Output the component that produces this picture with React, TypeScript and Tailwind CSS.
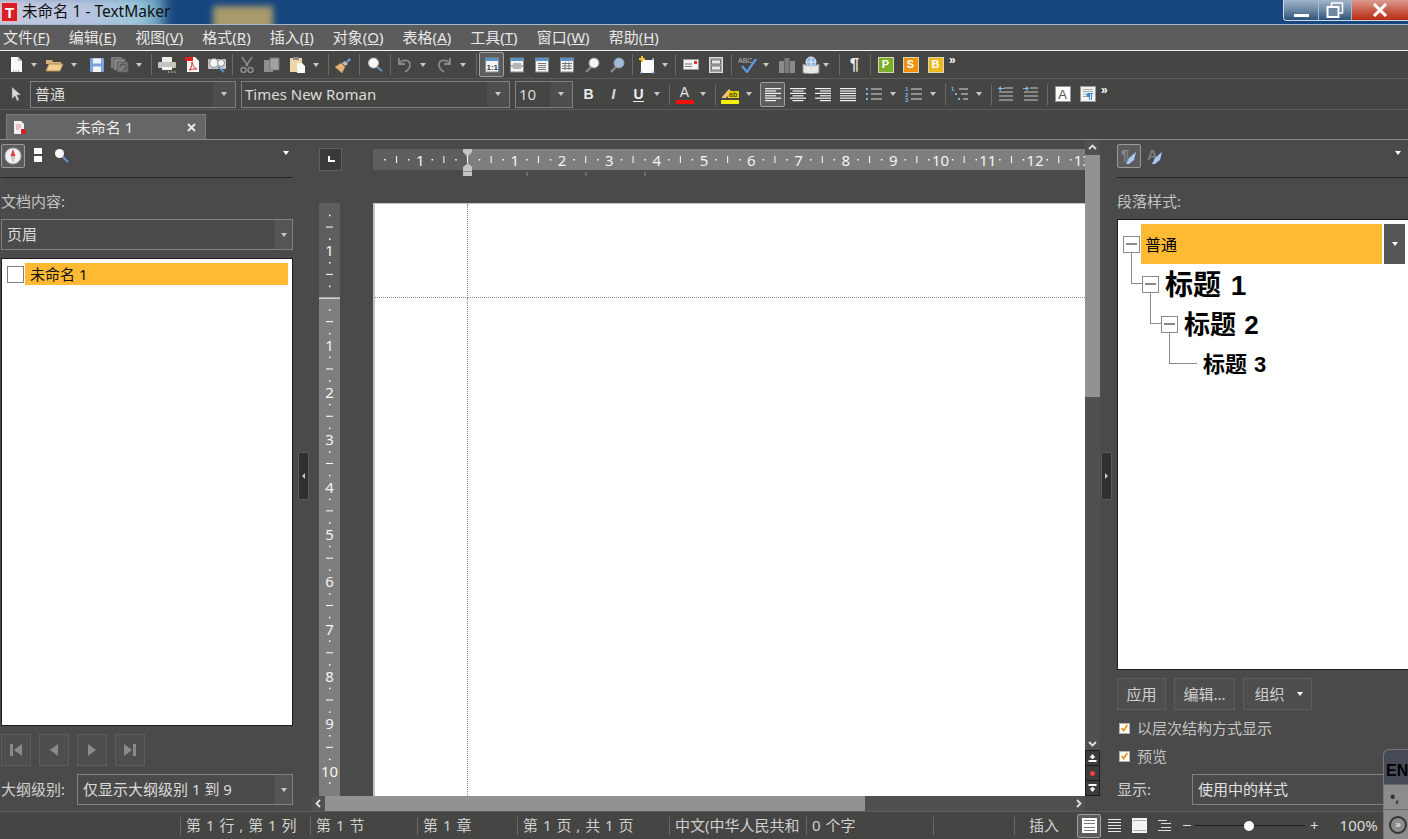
import type { ReactNode } from 'react';

type SlotProps = { m?: string; children?: ReactNode };

function Btn({ m = '', active, children }: SlotProps & { active?: boolean }) {
  return (
    <div
      className={`flex h-[25px] w-[25px] flex-none items-center justify-center rounded-[2px] ${m} ${
        active ? 'border border-[#a0a0a0] bg-[#5c5c5c]' : ''
      }`}
    >
      {children}
    </div>
  );
}

function Dd({ m = '' }: { m?: string }) {
  return (
    <div className={`flex h-[25px] w-[12px] flex-none items-center justify-center ${m}`}>
      <Caret />
    </div>
  );
}

function Caret({ color = 'border-t-[#c8c8c8]' }: { color?: string }) {
  return <span className={`block h-0 w-0 border-x-[3.5px] border-t-[4px] border-x-transparent ${color}`} />;
}

function Sep({ m = '' }: { m?: string }) {
  return <div className={`h-[21px] w-px flex-none bg-[#6a6a6a] ${m}`} />;
}

function Ico({ children, w = 20, h = 20 }: { children: ReactNode; w?: number; h?: number }) {
  return (
    <svg width={w} height={h} viewBox={`0 0 ${w} ${h}`} fill="none">
      {children}
    </svg>
  );
}

function Lines({ aligned }: { aligned: 'l' | 'c' | 'r' | 'j' }) {
  const rows = [16, 11, 16, 11, 16, 11];
  return (
    <Ico w={18} h={16}>
      {rows.map((len, i) => {
        const l = aligned === 'j' ? 16 : len;
        const x = aligned === 'l' || aligned === 'j' ? 1 : aligned === 'r' ? 17 - l : 9 - l / 2;
        return <rect key={i} x={x} y={2 + i * 2.4} width={l} height="1.2" fill="#f2f2f2" />;
      })}
    </Ico>
  );
}

function ViewIcon({ kind }: { kind: 0 | 1 | 2 | 3 }) {
  return (
    <Ico w={16} h={16}>
      <rect x="1.5" y="1" width="13" height="14" fill="#f4f4f4" stroke="#8a8a8a" />
      <rect x="1.5" y="1" width="13" height="3" fill="#5a92c8" />
      {kind === 0 && (
        <text x="2.5" y="12.5" fontSize="8" fontWeight="700" fill="#2c3e5a" fontFamily="Liberation Sans, sans-serif">
          1:1
        </text>
      )}
      {kind === 1 && (
        <>
          <rect x="4" y="6.5" width="8" height="1" fill="#777" />
          <rect x="4" y="8.5" width="8" height="1" fill="#777" />
          <rect x="4" y="10.5" width="8" height="1" fill="#777" />
          <path d="M2 9l1.5-1.5v3zM14 9l-1.500-1.500v3z" fill="#3a78b0" />
        </>
      )}
      {kind === 2 && (
        <>
          <rect x="4" y="6" width="8" height="1" fill="#777" />
          <rect x="4" y="8" width="8" height="1" fill="#777" />
          <rect x="4" y="10" width="8" height="1" fill="#777" />
          <rect x="4" y="12" width="8" height="1" fill="#777" />
        </>
      )}
      {kind === 3 && <path d="M3 6.500h10M3 9h10M3 11.500h10M6 5v8M10 5v8" stroke="#777" />}
    </Ico>
  );
}

function Magnifier({ fill = '#f6f6f6', handle = '#8a8a8a' }: { fill?: string; handle?: string }) {
  return (
    <Ico w={18} h={18}>
      <path d="M9.500 9.500L3 16" stroke={handle} strokeWidth="2.400" />
      <circle cx="11" cy="7" r="5" fill={fill} stroke="#9a9a9a" />
    </Ico>
  );
}

function Toolbar1() {
  return (
    <div className="flex h-[28px] items-center border-b border-[#5c5c5a] bg-[#454543] pl-[3px]">
      <Btn>
        <Ico w={14} h={17}>
          <path d="M2 1h7l4 4v11H2z" fill="#fafafa" />
          <path d="M9 1v4h4" fill="#bdbdbd" />
          <path d="M4 15h1M6.500 15h1M9 15h1" stroke="#666" />
        </Ico>
      </Btn>
      <Dd />
      <Btn m="ml-[2px]">
        <Ico w={19} h={16}>
          <path d="M1 3h6l1 2h8v2H1z" fill="#d8b47c" />
          <path d="M1 14L4 7h14l-3 7z" fill="#f3cf94" stroke="#b28d58" />
        </Ico>
      </Btn>
      <Dd m="ml-px" />
      <Btn m="ml-[4px]">
        <Ico w={16} h={16}>
          <rect x="1" y="1" width="14" height="14" rx="1" fill="#7da2dc" />
          <rect x="4" y="1.500" width="8" height="5" fill="#eef3fb" />
          <rect x="4" y="9.500" width="8" height="5.500" fill="#f4f4f4" />
        </Ico>
      </Btn>
      <Btn m="ml-[-2px]">
        <Ico w={19} h={17}>
          <rect x="1" y="1" width="11" height="11" fill="#7c7c7c" />
          <rect x="4" y="3" width="11" height="11" fill="#8e8e8e" stroke="#666" />
          <rect x="7" y="6" width="11" height="10" fill="#7a7a7a" stroke="#5a5a5a" />
          <path d="M10 11a3 3 0 1 1 3 3" stroke="#4a4a4a" />
        </Ico>
      </Btn>
      <Dd m="ml-px" />
      <Sep m="ml-[6px]" />
      <Btn m="ml-[2px]">
        <Ico w={20} h={18}>
          <rect x="5" y="1" width="10" height="5" fill="#eaeaea" />
          <rect x="1" y="6" width="18" height="6" rx="1" fill="#c4c4c4" />
          <rect x="5" y="11" width="10" height="3" fill="#f4f4f4" />
          <circle cx="16" cy="8" r="1" fill="#d9d54a" />
          <path d="M11 16h1.500M14 16h1.500M17 16h1.500" stroke="#ddd" />
        </Ico>
      </Btn>
      <Btn>
        <Ico w={16} h={17}>
          <path d="M3 1h8l4 4v11H3z" fill="#fafafa" />
          <rect x="1" y="1" width="8" height="4" fill="#e21e1e" />
          <path d="M5 14c2-1 3-4 3-8 1 4 2 6 5 7-3 0-5 0-8 1z" stroke="#d83030" />
        </Ico>
      </Btn>
      <Btn>
        <Ico w={20} h={17}>
          <rect x="1" y="3" width="18" height="10" rx="1" fill="#c8c8c8" />
          <circle cx="7" cy="7" r="4.500" fill="#f5f5f5" stroke="#888" />
          <circle cx="14" cy="7" r="3.500" fill="#f5f5f5" stroke="#888" />
          <path d="M11 11l6 5" stroke="#5c8ecb" strokeWidth="2" />
        </Ico>
      </Btn>
      <Sep m="ml-[3px]" />
      <Btn m="ml-px">
        <Ico w={16} h={18}>
          <path d="M3 1l6 9M13 1L7 10" stroke="#8c8c8c" strokeWidth="1.500" />
          <circle cx="4.500" cy="14" r="2.500" stroke="#8c8c8c" strokeWidth="1.500" />
          <circle cx="11.500" cy="14" r="2.500" stroke="#8c8c8c" strokeWidth="1.500" />
        </Ico>
      </Btn>
      <Btn>
        <Ico w={17} h={16}>
          <rect x="1" y="3" width="9" height="12" fill="#8f8f8f" />
          <rect x="7" y="1" width="9" height="12" fill="#a2a2a2" stroke="#777" />
        </Ico>
      </Btn>
      <Btn m="ml-px">
        <Ico w={17} h={18}>
          <rect x="1" y="2" width="12" height="14" fill="#efd6a6" />
          <rect x="4" y="1" width="6" height="3" fill="#8a8a8a" />
          <path d="M8 7h5l3 3v7H8z" fill="#fafafa" />
        </Ico>
      </Btn>
      <Dd />
      <Sep m="ml-[6px]" />
      <Btn m="ml-px">
        <Ico w={18} h={18}>
          <path d="M12 6l3-4 2 2-4 3z" fill="#6f9ed6" />
          <path d="M11 5l3 3-3 2-3-3z" fill="#bdbdbd" />
          <path d="M7 7l4 4-3 6-7-6z" fill="#e2b873" stroke="#b28d58" strokeWidth="0.500" />
        </Ico>
      </Btn>
      <Sep m="ml-[4px]" />
      <Btn m="ml-[2px]">
        <Ico w={16} h={16}>
          <path d="M9 9l6 5" stroke="#6b93cf" strokeWidth="2" />
          <circle cx="6.500" cy="6" r="5" fill="#f8f8f8" stroke="#bdbdbd" />
        </Ico>
      </Btn>
      <Sep m="ml-[3px]" />
      <Btn m="ml-px">
        <Ico w={17} h={17}>
          <path d="M3 2v6h6M3 8c3-5 11-5 11 1 0 3-2 5-5 7" stroke="#8a8a8a" strokeWidth="1.800" />
        </Ico>
      </Btn>
      <Dd />
      <Btn m="ml-[3px]">
        <Ico w={17} h={17}>
          <path d="M14 2v6H8M14 8C11 3 3 3 3 9c0 3 2 5 5 7" stroke="#8a8a8a" strokeWidth="1.800" />
        </Ico>
      </Btn>
      <Dd />
      <Sep m="ml-[7px]" />
      <Btn m="ml-[2px]" active>
        <ViewIcon kind={0} />
      </Btn>
      <Btn>
        <ViewIcon kind={1} />
      </Btn>
      <Btn>
        <ViewIcon kind={2} />
      </Btn>
      <Btn>
        <ViewIcon kind={3} />
      </Btn>
      <Btn>
        <Magnifier />
      </Btn>
      <Btn>
        <Magnifier fill="#9fbce0" />
      </Btn>
      <Sep m="ml-[3px]" />
      <Btn m="ml-px">
        <Ico w={19} h={18}>
          <rect x="4" y="4" width="13" height="13" fill="#fafafa" />
          <path d="M5 0v6M2 3h6" stroke="#f2c230" strokeWidth="2" />
          <rect x="15" y="2" width="2" height="2" fill="#7da2dc" />
          <rect x="3" y="15.500" width="2" height="2" fill="#7da2dc" />
          <rect x="15.500" y="15.500" width="2" height="2" fill="#7da2dc" />
        </Ico>
      </Btn>
      <Dd />
      <Sep m="ml-[4px]" />
      <Btn m="ml-[2px]">
        <Ico w={16} h={11}>
          <rect x="0.500" y="0.500" width="15" height="10" fill="#f2f2f2" stroke="#999" />
          <rect x="11" y="2" width="3" height="3" fill="#d33" />
          <path d="M2 5h7M2 7.500h7" stroke="#777" />
        </Ico>
      </Btn>
      <Btn>
        <Ico w={14} h={16}>
          <rect x="0.500" y="0.500" width="13" height="15" fill="#a8a8a8" stroke="#dcdcdc" />
          <rect x="2.500" y="3" width="9" height="4" fill="#e8e8e8" stroke="#777" />
          <rect x="2.500" y="9" width="9" height="4" fill="#e8e8e8" stroke="#777" />
        </Ico>
      </Btn>
      <Sep m="ml-[3px]" />
      <Btn m="ml-[3px]">
        <Ico w={20} h={17}>
          <path d="M4 10l5 6L18 3" stroke="#5f9ae0" strokeWidth="2.200" />
          <text x="0" y="7" fontSize="7" fill="#b8b8b8" fontFamily="Liberation Sans, sans-serif">
            ABC
          </text>
        </Ico>
      </Btn>
      <Dd />
      <Btn m="ml-[2px]">
        <Ico w={16} h={16}>
          <rect x="0" y="4" width="5" height="12" fill="#8a8a8a" />
          <rect x="5.500" y="1" width="5" height="15" fill="#7c7c7c" />
          <rect x="11" y="4" width="5" height="12" fill="#8a8a8a" />
        </Ico>
      </Btn>
      <Btn m="ml-[-1px]">
        <Ico w={18} h={18}>
          <path d="M1 8l8 3 8-3v9l-8 1-8-1z" fill="#e8e8e8" stroke="#888" />
          <circle cx="9" cy="6" r="5" fill="#8fb4dd" stroke="#e6eef8" />
          <path d="M4 6h10M9 1v10" stroke="#e6eef8" />
        </Ico>
      </Btn>
      <Dd m="ml-[-3px]" />
      <Sep m="ml-[7px]" />
      <Btn m="ml-[2px]">
        <span className="font-['Liberation_Sans',sans-serif] text-[17px] font-bold leading-none text-[#ededed]">¶</span>
      </Btn>
      <Sep m="ml-[3px]" />
      <Btn m="ml-[2px]">
        <OfficeBadge letter="P" color="bg-[#7cae2a]" />
      </Btn>
      <Btn>
        <OfficeBadge letter="S" color="bg-[#f0920c]" />
      </Btn>
      <Btn>
        <OfficeBadge letter="B" color="bg-[#f0b81c]" />
      </Btn>
      <span className="mb-[9px] ml-[1px] font-['Liberation_Sans',sans-serif] text-[12px] font-bold leading-none text-white">»</span>
    </div>
  );
}

function OfficeBadge({ letter, color }: { letter: string; color: string }) {
  return (
    <span
      className={`flex h-[16px] w-[16px] items-center justify-center border border-[#d8d8b8] font-['Liberation_Sans',sans-serif] text-[11px] font-bold leading-none text-white ${color}`}
    >
      {letter}
    </span>
  );
}

function Combo({ w, label, small }: { w: string; label: string; small?: boolean }) {
  return (
    <div className={`flex h-[27px] flex-none items-center border border-[#808080] ${w}`}>
      <span className={`flex-1 whitespace-nowrap text-[15px] leading-[20px] text-[#dcdcdc] ${small ? 'pl-[3px]' : 'pl-[4px]'}`}>
        {label}
      </span>
      <span className="flex h-full w-[22px] flex-none items-center justify-center bg-[#4e4e4e]">
        <Caret />
      </span>
    </div>
  );
}

function Toolbar2() {
  return (
    <div className="flex h-[31px] items-center border-b border-[#5c5c5a] bg-[#454543] pl-[3px]">
      <Btn>
        <Ico w={12} h={16}>
          <path d="M2 1v12l3-3 2 5 2-1-2-5h4z" fill="#d8d8d8" stroke="#666" strokeWidth="0.500" />
        </Ico>
      </Btn>
      <div className="ml-[2px]">
        <Combo w="w-[206px]" label="普通" />
      </div>
      <div className="ml-[5px]">
        <Combo w="w-[269px]" label="Times New Roman" small />
      </div>
      <div className="ml-[5px]">
        <Combo w="w-[58px]" label="10" small />
      </div>
      <Btn m="ml-[3px]">
        <span className="font-['Liberation_Sans',sans-serif] text-[14px] font-bold leading-none text-[#eee]">B</span>
      </Btn>
      <Btn>
        <span className="font-['Liberation_Sans',sans-serif] text-[14px] font-bold italic leading-none text-[#ddd]">I</span>
      </Btn>
      <Btn>
        <span className="border-b border-[#eee] font-['Liberation_Sans',sans-serif] text-[14px] font-bold leading-[14px] text-[#eee]">U</span>
      </Btn>
      <Dd />
      <Sep m="ml-[6px]" />
      <Btn m="ml-[2px]">
        <span className="flex flex-col items-center">
          <span className="font-['Liberation_Sans',sans-serif] text-[14px] leading-[14px] text-[#e6e6e6]">A</span>
          <span className="mt-px h-[4px] w-[18px] bg-[#f01010]" />
        </span>
      </Btn>
      <Dd />
      <Sep m="ml-[6px]" />
      <Btn m="ml-[2px]">
        <Ico w={19} h={19}>
          <path d="M1 12l7-8 3 3-6 6H1z" fill="#f2c27a" />
          <rect x="7" y="6" width="11" height="7" fill="#e6d200" />
          <text x="8" y="12" fontSize="7" fontWeight="700" fill="#5a5200" fontFamily="Liberation Sans, sans-serif">
            ab
          </text>
          <rect x="0" y="15" width="18" height="4" fill="#f5ef00" />
        </Ico>
      </Btn>
      <Dd />
      <Btn m="ml-[5px]" active>
        <Lines aligned="l" />
      </Btn>
      <Btn>
        <Lines aligned="c" />
      </Btn>
      <Btn>
        <Lines aligned="r" />
      </Btn>
      <Btn>
        <Lines aligned="j" />
      </Btn>
      <Btn m="ml-px">
        <Ico w={18} h={14}>
          <path d="M6 2h11M6 7h11M6 12h11" stroke="#ddd" />
          <path d="M1 2h3M1 7h3M1 12h3" stroke="#7db8ea" strokeWidth="2" strokeDasharray="2 1" />
        </Ico>
      </Btn>
      <Dd m="ml-px" />
      <Btn m="ml-[2px]">
        <Ico w={18} h={16}>
          <path d="M6 3h11M6 8h11M6 13h11" stroke="#ddd" />
          <text x="0" y="5" fontSize="6" fontWeight="700" fill="#7db8ea" fontFamily="Liberation Sans, sans-serif">1</text>
          <text x="0" y="10.500" fontSize="6" fontWeight="700" fill="#7db8ea" fontFamily="Liberation Sans, sans-serif">2</text>
          <text x="0" y="16" fontSize="6" fontWeight="700" fill="#7db8ea" fontFamily="Liberation Sans, sans-serif">3</text>
        </Ico>
      </Btn>
      <Dd m="ml-px" />
      <Sep m="ml-[6px]" />
      <Btn m="ml-px">
        <Ico w={18} h={16}>
          <text x="0" y="5" fontSize="6" fontWeight="700" fill="#7db8ea" fontFamily="Liberation Sans, sans-serif">1</text>
          <path d="M8 3h9M10 8h7M12 13h5" stroke="#ddd" />
          <path d="M4 8h2M7 13h2" stroke="#7db8ea" strokeWidth="2" />
        </Ico>
      </Btn>
      <Dd m="ml-px" />
      <Sep m="ml-[6px]" />
      <Btn m="ml-px">
        <Ico w={16} h={16}>
          <path d="M6 2h9M1 6h14M1 10h14M1 14h14" stroke="#c8c8c8" />
          <path d="M0 2.500l3-2.500v5zM3 2h3v1H3z" fill="#7db8ea" />
        </Ico>
      </Btn>
      <Btn>
        <Ico w={16} h={16}>
          <path d="M7 2h8M1 6h14M1 10h14M1 14h14" stroke="#c8c8c8" />
          <path d="M6 2.500L3 0v5zM0 2h3v1H0z" fill="#7db8ea" />
        </Ico>
      </Btn>
      <Sep m="ml-[4px]" />
      <Btn m="ml-[2px]">
        <span className="flex h-[16px] w-[16px] items-center justify-center border border-[#999] bg-white font-['Liberation_Sans',sans-serif] text-[13px] leading-none text-[#555]">
          A
        </span>
      </Btn>
      <Btn>
        <Ico w={16} h={16}>
          <rect x="0.500" y="0.500" width="15" height="15" fill="#f4f4f4" stroke="#999" />
          <path d="M3 3.500h10M3 5.500h10M3 8h4M3 10.500h4" stroke="#aaa" />
          <path d="M8 7h5v1h-1v6h-1V8h-1v6H9v-3a2 2 0 0 1-1-4z" fill="#3a86c8" />
        </Ico>
      </Btn>
      <span className="mb-[9px] ml-[1px] font-['Liberation_Sans',sans-serif] text-[12px] font-bold leading-none text-white">»</span>
    </div>
  );
}

function TitleBar() {
  return (
    <div className="relative flex h-[25px] items-start overflow-hidden border-b border-[#a8b8cc] bg-[#16467f]">
      <div className="absolute left-[-10px] top-[-6px] h-[40px] w-[175px] bg-[linear-gradient(90deg,#c6cce0_0%,#b8c4e0_55%,#9cc8dc_85%,#5a90b0_100%)] blur-[6px]" />
      <div className="absolute left-[213px] top-[6px] h-[24px] w-[60px] bg-[#a89a6c] blur-[3px]" />
      <div className="relative flex h-[24px] items-center">
        <span className="ml-[1px] flex h-[20px] w-[17px] items-center justify-center border border-[#f0b8b8] bg-[#d81e28] font-['Liberation_Sans',sans-serif] text-[15px] font-bold leading-none text-white">
          T
        </span>
        <span className="ml-[4px] text-[15.500px] leading-none text-[#111]">未命名 1 - TextMaker</span>
      </div>
      <div className="relative ml-auto flex h-[21px] overflow-hidden rounded-bl-[4px] border-b border-l border-[#d0dcea]">
        <span className="flex w-[35px] items-end justify-center border-r border-[#a8b8cc] bg-[linear-gradient(180deg,#a0b4c8_0%,#6c88a4_50%,#2c5278_100%)] pb-[3px]">
          <span className="h-[3px] w-[15px] bg-white" />
        </span>
        <span className="flex w-[33px] items-center justify-center border-r border-[#a8b8cc] bg-[linear-gradient(180deg,#a0b4c8_0%,#6c88a4_50%,#2c5278_100%)]">
          <Ico w={18} h={17}>
            <rect x="5.500" y="1" width="11" height="10" stroke="#fff" strokeWidth="1.500" />
            <rect x="1.500" y="5" width="11" height="10" fill="#6c88a4" stroke="#fff" strokeWidth="2" />
          </Ico>
        </span>
        <span className="flex w-[56px] items-center justify-center bg-[linear-gradient(180deg,#dc9a90_0%,#c8604c_50%,#b82c14_100%)]">
          <Ico w={16} h={14}>
            <path d="M2 1l12 12M14 1L2 13" stroke="#fff" strokeWidth="3" />
          </Ico>
        </span>
      </div>
    </div>
  );
}

const MENUS: [string, string][] = [
  ['文件', 'F'],
  ['编辑', 'E'],
  ['视图', 'V'],
  ['格式', 'R'],
  ['插入', 'I'],
  ['对象', 'O'],
  ['表格', 'A'],
  ['工具', 'T'],
  ['窗口', 'W'],
  ['帮助', 'H'],
];

function MenuBar() {
  return (
    <div className="flex h-[26px] items-center gap-[19px] border-b border-[#f0f0f0] bg-[#5c5c5c] pl-[3px] text-[15px] leading-none text-[#e8e8e8]">
      {MENUS.map(([name, key]) => (
        <span key={key} className="whitespace-nowrap">
          {name}(<u>{key}</u>)
        </span>
      ))}
    </div>
  );
}

function TabStrip() {
  return (
    <div className="flex h-[30px] items-end border-b border-[#8a8a8a] bg-[#454543] pl-[6px]">
      <div className="flex h-[25px] w-[200px] items-center border border-b-0 border-[#7a7a7a] bg-[#666666] pl-[6px] pr-[8px]">
        <Ico w={14} h={15}>
          <path d="M1 1h7l3 3v10H1z" fill="#f2f2f2" />
          <path d="M3 5h5M3 7h5M3 9h3" stroke="#d88" />
          <rect x="8" y="9" width="5" height="5" fill="#d81e28" />
        </Ico>
        <span className="flex-1 pr-[4px] text-center text-[15px] leading-none text-[#ececec]">未命名 1</span>
        <Ico w={11} h={11}>
          <path d="M2 2l7 7M9 2l-7 7" stroke="#e8e8e8" strokeWidth="2" />
        </Ico>
      </div>
    </div>
  );
}

function NavBtn({ children }: { children: ReactNode }) {
  return (
    <div className="flex h-[32px] w-[30px] items-center justify-center border border-[#5c5c5c] bg-[#4e4e4e]">
      {children}
    </div>
  );
}

function LeftPanel() {
  return (
    <div className="flex w-[297px] flex-none flex-col pl-px">
      <div className="flex h-[38px] w-[292px] flex-none items-start border-b border-[#262626] pt-[4px]">
        <span className="flex h-[24px] w-[24px] items-center justify-center rounded-[2px] border border-[#9a9a9a] bg-[#5c5c5c]">
          <Ico w={18} h={18}>
            <circle cx="9" cy="9" r="8" fill="#f2f2f2" stroke="#aaa" />
            <path d="M9 2l2.500 7h-5z" fill="#e83838" />
            <path d="M9 16l2.500-7h-5z" fill="#c4c4c4" />
          </Ico>
        </span>
        <span className="ml-[9px] mt-[4px] flex w-[8px] flex-col gap-[2px]">
          <span className="h-[6px] w-[8px] bg-white" />
          <span className="h-[6px] w-[8px] bg-white" />
        </span>
        <span className="ml-[12px] mt-[4px]">
          <Ico w={16} h={16}>
            <path d="M8 8l6 6" stroke="#6b93cf" strokeWidth="2" />
            <circle cx="5.500" cy="5.500" r="4.500" fill="#f8f8f8" />
          </Ico>
        </span>
        <span className="ml-auto mr-[4px] mt-[7px]">
          <Caret color="border-t-white" />
        </span>
      </div>
      <div className="mt-[15px] text-[15px] leading-[16px] text-[#c4c4c4]">文档内容:</div>
      <div className="mt-[10px] flex h-[31px] w-[292px] flex-none items-center border border-[#808080]">
        <span className="flex-1 pl-[5px] text-[15px] leading-none text-[#dcdcdc]">页眉</span>
        <span className="flex h-full w-[17px] items-center justify-center bg-[#555555]">
          <Caret />
        </span>
      </div>
      <div className="mt-[8px] flex h-[468px] w-[292px] flex-none flex-col border border-[#1c1c1c] bg-white pl-[5px] pr-[4px] pt-[4px]">
        <div className="flex items-center">
          <span className="h-[17px] w-[17px] flex-none border border-[#808080] bg-white" />
          <span className="ml-px flex h-[22px] flex-1 items-center bg-[#ffb933] pl-[5px] text-[15px] leading-none text-[#111]">
            未命名 1
          </span>
        </div>
      </div>
      <div className="mt-[8px] flex gap-[8px]">
        <NavBtn>
          <Ico w={14} h={14}>
            <path d="M1 1h3v12H1zM13 1v12L5 7z" fill="#8a8a8a" />
          </Ico>
        </NavBtn>
        <NavBtn>
          <Ico w={10} h={14}>
            <path d="M9 1v12L1 7z" fill="#8a8a8a" />
          </Ico>
        </NavBtn>
        <NavBtn>
          <Ico w={10} h={14}>
            <path d="M1 1v12l8-6z" fill="#8a8a8a" />
          </Ico>
        </NavBtn>
        <NavBtn>
          <Ico w={14} h={14}>
            <path d="M10 1h3v12h-3zM1 1v12l8-6z" fill="#8a8a8a" />
          </Ico>
        </NavBtn>
      </div>
      <div className="mt-[8px] flex items-center">
        <span className="w-[76px] whitespace-nowrap text-[15px] leading-none text-[#d0d0d0]">大纲级别:</span>
        <div className="flex h-[31px] w-[216px] items-center border border-[#808080]">
          <span className="flex-1 whitespace-nowrap pl-[5px] text-[15px] leading-none text-[#dcdcdc]">仅显示大纲级别 1 到 9</span>
          <span className="flex h-full w-[17px] items-center justify-center bg-[#555555]">
            <Caret />
          </span>
        </div>
      </div>
    </div>
  );
}

function Splitter({ w, dir }: { w: string; dir: 'l' | 'r' }) {
  return (
    <div className={`flex flex-none items-center ${w}`}>
      <div className="ml-px flex h-[48px] w-[11px] items-center justify-center rounded-[2px] border border-[#5a5a5a] bg-[#303030]">
        <span
          className={`h-0 w-0 border-y-[3px] border-y-transparent ${
            dir === 'l' ? 'border-r-[3px] border-r-[#c8c8c8]' : 'border-l-[3px] border-l-[#c8c8c8]'
          }`}
        />
      </div>
    </div>
  );
}

const INCH = 47.3;

function HRuler() {
  const origin = 94.5;
  const nums = [-1, 1, 2, 3, 4, 5, 6, 7, 8, 9, 10, 11, 12, 13];
  const steps = Array.from({ length: 32 }, (_, i) => i - 4);
  return (
    <svg width="712" height="32" className="block flex-none">
      <rect x="0" y="0" width="95" height="21" fill="#5e5e5e" />
      <rect x="95" y="0" width="617" height="21" fill="#7e7e7e" />
      {steps.map((s) => {
        if (s % 2 === 0) return null;
        const x = origin + (s * INCH) / 2;
        return <rect key={s} x={x - 0.5} y="7" width="1" height="7" fill="#fff" />;
      })}
      {steps.map((s) => {
        const a = origin + ((s + 0.5) * INCH) / 2;
        return <rect key={`d${s}`} x={a - 0.5} y="10" width="1.500" height="1.500" fill="#fff" />;
      })}
      {nums.map((n) => (
        <text
          key={n}
          x={origin + n * INCH}
          y="16.500"
          textAnchor="middle"
          fontSize="15"
          fill="#f4f4f4"
          fontFamily="Noto Sans, sans-serif"
        >
          {Math.abs(n)}
        </text>
      ))}
      <path d="M90 0h9v3l-4.500 5L90 3z" fill="#c4c4c4" />
      <path d="M95 14l4 4v9h-9v-9z" fill="#c4c4c4" />
      <rect x="94" y="7" width="1" height="7" fill="#fff" />
      <rect x="90" y="22" width="9" height="1" fill="#888" />
      <rect x="153.500" y="23" width="1" height="4" fill="#8a8a8a" />
      <rect x="212.500" y="23" width="1" height="4" fill="#8a8a8a" />
      <rect x="271.500" y="23" width="1" height="4" fill="#8a8a8a" />
    </svg>
  );
}

function VRuler() {
  const origin = 95;
  const nums = [-1, 1, 2, 3, 4, 5, 6, 7, 8, 9, 10];
  const steps = Array.from({ length: 25 }, (_, i) => i - 4);
  return (
    <svg width="21" height="593" className="block">
      <rect x="0" y="0" width="21" height="95" fill="#5e5e5e" />
      <rect x="0" y="95" width="21" height="498" fill="#7e7e7e" />
      <rect x="0" y="94.500" width="21" height="1.200" fill="#f4f4f4" />
      {steps.map((s) =>
        s % 2 === 0 ? null : (
          <rect key={s} x="7" y={origin + (s * INCH) / 2 - 0.5} width="7" height="1" fill="#fff" />
        ),
      )}
      {steps.map((s) => (
        <rect key={`d${s}`} x="10" y={origin + ((s + 0.5) * INCH) / 2 - 0.5} width="1.500" height="1.500" fill="#fff" />
      ))}
      {nums.map((n) => (
        <text
          key={n}
          x="10.500"
          y={origin + n * INCH + 5.500}
          textAnchor="middle"
          fontSize="15"
          fill="#f4f4f4"
          fontFamily="Noto Sans, sans-serif"
        >
          {Math.abs(n)}
        </text>
      ))}
    </svg>
  );
}

function Chevron({ d }: { d: string }) {
  return (
    <svg width="9" height="9" viewBox="0 0 9 9" fill="none">
      <path d={d} stroke="#e0e0e0" strokeWidth="1.800" />
    </svg>
  );
}

function VScroll() {
  return (
    <div className="flex w-[15px] flex-none flex-col bg-[#505050]">
      <div className="flex h-[15px] flex-none items-center justify-center">
        <Chevron d="M1 6l3.500-3.500L8 6" />
      </div>
      <div className="h-[242px] flex-none bg-[#929292]" />
      <div className="flex-1" />
      <div className="flex h-[13px] flex-none items-center justify-center">
        <Chevron d="M1 3l3.500 3.500L8 3" />
      </div>
      <div className="flex h-[46px] flex-none flex-col border border-[#1c1c1c] bg-[#3c3c3c]">
        <div className="flex flex-1 items-center justify-center border-b border-[#1c1c1c]">
          <svg width="9" height="8" viewBox="0 0 9 8">
            <path d="M4.500 0l3 3.500h-6z" fill="#fff" />
            <rect x="3.500" y="3" width="2" height="2" fill="#fff" />
            <rect x="0.500" y="6" width="8" height="2" fill="#fff" />
          </svg>
        </div>
        <div className="flex flex-1 items-center justify-center border-b border-[#1c1c1c]">
          <span className="h-[5px] w-[5px] rounded-full bg-[#f04040]" />
        </div>
        <div className="flex flex-1 items-center justify-center">
          <svg width="9" height="8" viewBox="0 0 9 8">
            <rect x="0.500" y="0" width="8" height="2" fill="#fff" />
            <rect x="3.500" y="3" width="2" height="2" fill="#fff" />
            <path d="M4.500 8l3-3.500h-6z" fill="#fff" />
          </svg>
        </div>
      </div>
    </div>
  );
}

function Center() {
  return (
    <div className="flex min-w-0 flex-1 flex-col">
      <div className="flex min-h-0 flex-1">
        <div className="ml-[7px] flex w-[54px] flex-none flex-col">
          <div className="ml-0 mt-[8px] flex h-[23px] w-[23px] items-center justify-center border border-[#606060] bg-[#3a3a3a]">
            <span className="mb-px ml-px h-[6px] w-[7px] border-b-2 border-l-2 border-white" />
          </div>
          <div className="mt-[32px]">
            <VRuler />
          </div>
        </div>
        <div className="flex w-[712px] flex-none flex-col pt-[9px]">
          <HRuler />
          <div className="mt-[22px] grid flex-1 grid-cols-[93px_1fr] grid-rows-[94px_1fr] border-l-2 border-t border-[#c4c4c4] bg-white">
            <div className="border-b border-r border-dotted border-[#8c8c8c]" />
            <div className="border-b border-dotted border-[#8c8c8c]" />
            <div className="border-r border-dotted border-[#8c8c8c]" />
            <div />
          </div>
        </div>
        <VScroll />
      </div>
      <div className="flex h-[15px] flex-none">
        <div className="flex w-[13px] flex-none items-center justify-center bg-[#505050]">
          <Chevron d="M6 1L2.500 4.500 6 8" />
        </div>
        <div className="w-[540px] flex-none bg-[#929292]" />
        <div className="w-[207px] flex-none bg-[#505050]" />
        <div className="flex w-[13px] flex-none items-center justify-center bg-[#505050]">
          <Chevron d="M3 1l3.500 3.500L3 8" />
        </div>
      </div>
    </div>
  );
}

function TreeBox() {
  return (
    <span className="relative z-10 flex h-[17px] w-[17px] flex-none items-center justify-center border border-[#8a8a8a] bg-white">
      <span className="h-[2px] w-[11px] bg-[#8a8a8a]" />
    </span>
  );
}

function StyleTree() {
  return (
    <div className="mt-[9px] h-[451px] flex-none overflow-hidden border border-r-0 border-[#1c1c1c] bg-white pl-[5px] pt-[4px] font-['Liberation_Sans','Noto_Sans_CJK_SC',sans-serif] text-black">
      <div className="relative flex h-[40px] items-center">
        <TreeBox />
        <span className="ml-px flex h-full w-[241px] items-center bg-[#ffb933] pl-[4px] font-['Noto_Sans_CJK_SC',sans-serif] text-[16px] leading-none">普通</span>
        <span className="ml-[2px] flex h-full w-[21px] items-center justify-center bg-[#555555]">
          <Caret color="border-t-white" />
        </span>
      </div>
      <div className="relative flex h-[40px] items-center pl-[19px]">
        <span className="absolute left-[8px] top-[-12px] h-[32px] w-[11px] border-b border-l border-[#8a8a8a]" />
        <TreeBox />
        <span className="ml-[6px] mt-[3px] text-[28px] font-bold leading-none [word-spacing:2px]">标题 1</span>
      </div>
      <div className="relative flex h-[40px] items-center pl-[38px]">
        <span className="absolute left-[27px] top-[-12px] h-[32px] w-[11px] border-b border-l border-[#8a8a8a]" />
        <TreeBox />
        <span className="ml-[6px] mt-[1px] text-[26px] font-bold leading-none [word-spacing:1px]">标题 2</span>
      </div>
      <div className="relative flex h-[40px] items-center pl-[80px]">
        <span className="absolute left-[46px] top-[-12px] h-[32px] w-[28px] border-b border-l border-[#8a8a8a]" />
        <span className="mt-px text-[22px] font-bold leading-none [word-spacing:1px]">标题 3</span>
      </div>
    </div>
  );
}

function Check({ label, m }: { label: string; m: string }) {
  return (
    <div className={`flex items-center ${m}`}>
      <span className="flex h-[11px] w-[11px] items-center justify-center border border-[#b0b0b0] bg-white">
        <svg width="11" height="11" viewBox="0 0 11 11" fill="none">
          <path d="M2 5l2.500 3L9 1" stroke="#f08a10" strokeWidth="2" />
        </svg>
      </span>
      <span className="ml-[7px] text-[15px] leading-none text-[#c4c4c4]">{label}</span>
    </div>
  );
}

function RightBtn({ w, children }: { w: string; children: ReactNode }) {
  return (
    <div className={`flex h-[32px] items-center justify-center border border-[#5c5c5c] bg-[#4e4e4e] text-[15px] leading-none text-[#d0d0d0] ${w}`}>
      {children}
    </div>
  );
}

function RightPanel() {
  return (
    <div className="flex w-[291px] flex-none flex-col">
      <div className="flex h-[38px] items-start border-b border-[#262626] pt-[4px]">
        <span className="flex h-[24px] w-[24px] items-center justify-center rounded-[2px] border border-[#9a9a9a] bg-[#5c5c5c]">
          <Ico w={16} h={18}>
            <text x="0" y="13" fontSize="15" fontWeight="700" fill="#888" fontFamily="Liberation Sans, sans-serif">¶</text>
            <path d="M5 17l3-6 7-6-2 8-5 4z" fill="#a8c8f4" />
          </Ico>
        </span>
        <span className="ml-[6px] mt-[3px]">
          <Ico w={17} h={18}>
            <text x="0" y="13" fontSize="15" fontWeight="700" fill="#7c7c7c" fontFamily="Liberation Sans, sans-serif">A</text>
            <path d="M5 17l3-6 7-6-2 8-5 4z" fill="#a8c8f4" />
          </Ico>
        </span>
        <span className="ml-auto mr-[7px] mt-[7px]">
          <Caret color="border-t-white" />
        </span>
      </div>
      <div className="mt-[15px] text-[15px] leading-[16px] text-[#c4c4c4]">段落样式:</div>
      <div className="mt-px">
        <StyleTree />
      </div>
      <div className="mt-[8px] flex gap-[8px]">
        <RightBtn w="w-[49px]">应用</RightBtn>
        <RightBtn w="w-[61px]">编辑...</RightBtn>
        <RightBtn w="w-[69px]">
          <span className="ml-[2px]">组织</span>
          <span className="ml-[12px]">
            <Caret color="border-t-white" />
          </span>
        </RightBtn>
      </div>
      <Check m="ml-[2px] mt-[11px]" label="以层次结构方式显示" />
      <Check m="ml-[2px] mt-[13px]" label="预览" />
      <div className="mt-[10px] flex items-center">
        <span className="w-[75px] text-[15px] leading-none text-[#d0d0d0]">显示:</span>
        <div className="flex h-[31px] flex-1 items-center border border-[#808080] pl-[5px] text-[15px] leading-none text-[#e0e0e0]">
          使用中的样式
        </div>
      </div>
    </div>
  );
}

function StatusCell({ w, children }: { w: string; children?: ReactNode }) {
  return (
    <div className={`flex h-[18px] flex-none items-center whitespace-nowrap border-l border-[#6a6a6a] pl-[5px] text-[15px] leading-none text-[#cfcfcf] [word-spacing:1px] ${w}`}>
      {children}
    </div>
  );
}

function StatusBar() {
  return (
    <div className="flex h-[28px] flex-none items-center border-t border-[#5c5c5a] bg-[#454543] pl-[180px]">
      <StatusCell w="w-[130px]">第 1 行 , 第 1 列</StatusCell>
      <StatusCell w="w-[107px]">第 1 节</StatusCell>
      <StatusCell w="w-[100px]">第 1 章</StatusCell>
      <StatusCell w="w-[152px]">第 1 页 , 共 1 页</StatusCell>
      <StatusCell w="w-[137px]">中文(中华人民共和</StatusCell>
      <StatusCell w="w-[127px]">0 个字</StatusCell>
      <StatusCell w="w-[81px]" />
      <StatusCell w="w-[63px]">
        <span className="ml-[9px]">插入</span>
      </StatusCell>
      <div className="flex h-[24px] w-[24px] flex-none items-center justify-center rounded-[2px] border border-[#a0a0a0] bg-[#5c5c5c]">
        <span className="flex h-[15px] w-[15px] flex-col justify-between bg-white p-[2px]">
          <span className="h-px bg-[#777]" />
          <span className="h-px bg-[#777]" />
          <span className="h-px bg-[#777]" />
          <span className="h-px bg-[#777]" />
        </span>
      </div>
      <div className="ml-[7px] flex h-[13px] w-[13px] flex-none flex-col justify-between">
        <span className="h-px bg-[#e8e8e8]" />
        <span className="h-px bg-[#e8e8e8]" />
        <span className="h-px bg-[#e8e8e8]" />
        <span className="h-px bg-[#e8e8e8]" />
        <span className="h-px bg-[#e8e8e8]" />
      </div>
      <div className="ml-[11px] flex h-[15px] w-[15px] flex-none flex-col justify-between border-y-[2px] border-x-[1px] border-[#f4f4f4] bg-[#f4f4f4]">
        <span className="h-px bg-[#aaa]" />
        <span className="h-px bg-[#aaa]" />
      </div>
      <div className="ml-[11px] flex h-[12px] w-[13px] flex-none flex-col justify-between">
        <span className="h-px w-[9px] bg-[#ddd]" />
        <span className="ml-[3px] h-px w-[10px] bg-[#ddd]" />
        <span className="ml-[3px] h-px w-[10px] bg-[#ddd]" />
        <span className="h-px w-[13px] bg-[#ddd]" />
      </div>
      <span className="ml-[12px] h-px w-[8px] flex-none bg-[#ddd]" />
      <div className="relative ml-[4px] flex h-[12px] w-[110px] flex-none items-center">
        <span className="h-px w-full bg-[#1c1c1c]" />
        <span className="absolute left-[49px] top-[1px] h-[10px] w-[10px] rounded-full bg-white" />
      </div>
      <span className="ml-[5px] flex-none text-[15px] leading-none text-[#e0e0e0]">+</span>
      <span className="ml-[21px] flex-none font-['Noto_Sans',sans-serif] text-[15px] leading-none text-[#dcdcdc]">100%</span>
    </div>
  );
}

function LangBar() {
  return (
    <div className="absolute bottom-0 right-0 flex h-[90px] w-[25px] flex-col overflow-hidden rounded-tl-[6px] border-l border-t border-[#777] bg-[#8c8c8c]">
      <div className="flex h-[34px] flex-none items-center bg-[#464a56] pl-[2px] pt-[8px] font-['Liberation_Sans',sans-serif] text-[16px] font-bold leading-none text-black">
        EN
      </div>
      <div className="flex h-[26px] flex-none items-center border-y border-[#6a6a6a] pl-[6px] text-[14px] font-bold leading-none text-[#333]">
        •,
      </div>
      <div className="flex flex-1 items-center pl-[5px]">
        <span className="flex h-[18px] w-[18px] items-center justify-center rounded-full border-2 border-[#333] font-['Liberation_Sans',sans-serif] text-[10px] leading-none text-white">
          »
        </span>
      </div>
    </div>
  );
}

export default function App() {
  return (
    <div className="relative flex h-[839px] w-[1408px] flex-col overflow-hidden bg-[#4a4a4a] font-['Noto_Sans','Noto_Sans_CJK_SC',sans-serif]">
      <TitleBar />
      <MenuBar />
      <Toolbar1 />
      <Toolbar2 />
      <TabStrip />
      <div className="flex min-h-0 flex-1">
        <LeftPanel />
        <Splitter w="w-[15px]" dir="l" />
        <Center />
        <Splitter w="w-[17px]" dir="r" />
        <RightPanel />
      </div>
      <StatusBar />
      <LangBar />
    </div>
  );
}
